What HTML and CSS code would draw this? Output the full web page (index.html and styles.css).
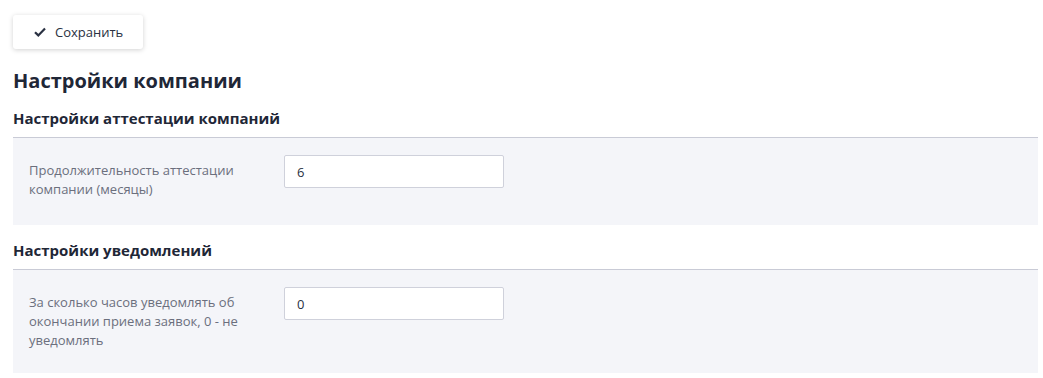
FILE: index.html
```html
<!DOCTYPE html>
<html lang="ru">
<head>
<meta charset="utf-8">
<link rel="stylesheet" href="styles.css">
</head>
<body>
<div class="page">
  <div class="toolbar">
    <button class="btn" type="button">
      <svg class="btn-icon" width="12" height="10" viewBox="0 0 12 10"><path d="M1 5.2 L4.3 8.4 L11 1.6" fill="none" stroke="#2a3142" stroke-width="2.2" stroke-linecap="butt" stroke-linejoin="miter"/></svg>
      <span>Сохранить</span>
    </button>
  </div>
  <h1 class="title">Настройки компании</h1>

  <section class="section">
    <h2 class="section-title">Настройки аттестации компаний</h2>
    <div class="panel">
      <div class="row">
        <label class="label">Продолжительность аттестации компании (месяцы)</label>
        <input class="input" type="text" value="6">
      </div>
    </div>
  </section>

  <section class="section">
    <h2 class="section-title">Настройки уведомлений</h2>
    <div class="panel panel-last">
      <div class="row">
        <label class="label">За сколько часов уведомлять об окончании приема заявок, 0 - не уведомлять</label>
        <input class="input" type="text" value="0">
      </div>
    </div>
  </section>
</div>
</body>
</html>
```
FILE: styles.css
```css
* { box-sizing: border-box; }
html, body { margin: 0; padding: 0; background: #fff; }
body {
  font-family: "Open Sans", "Liberation Sans", sans-serif;
  color: #2a3142;
}
.page {
  padding: 15px 5px 0 13px;
}
.toolbar { display: flex; }
.btn {
  display: flex;
  align-items: center;
  gap: 9px;
  width: 130px;
  height: 34px;
  padding: 0 0 0 21px;
  border: none;
  border-radius: 3px;
  background: #fff;
  box-shadow: 0 1px 5px rgba(0, 0, 0, 0.18);
  font-family: inherit;
  font-size: 13px;
  color: #2a3142;
}
.btn-icon { display: block; }
.title {
  margin: 18px 0 0;
  font-size: 20px;
  font-weight: 700;
  line-height: 28px;
  color: #1f2737;
}
.section-title {
  margin: 0;
  font-size: 15px;
  font-weight: 700;
  line-height: 20px;
  color: #1f2737;
  padding-bottom: 9px;
  border-bottom: 1px solid #c9cbd6;
}
.section:first-of-type .section-title { margin-top: 13px; }
.section + .section .section-title { margin-top: 15px; }
.panel {
  background: #f4f5f9;
  padding: 17px 16px 26px;
}
.panel-last { padding-bottom: 23px; }
.row {
  display: grid;
  grid-template-columns: 255px 220px;
  align-items: start;
}
.label {
  font-size: 13px;
  line-height: 19px;
  color: #6b6f7d;
  padding-top: 6px;
  padding-right: 14px;
}
.input {
  height: 33px;
  width: 220px;
  border: 1px solid #cfd1db;
  border-radius: 2px;
  background: #fff;
  padding: 0 12px;
  font-family: inherit;
  font-size: 13px;
  color: #2a3142;
  outline: none;
}
```
